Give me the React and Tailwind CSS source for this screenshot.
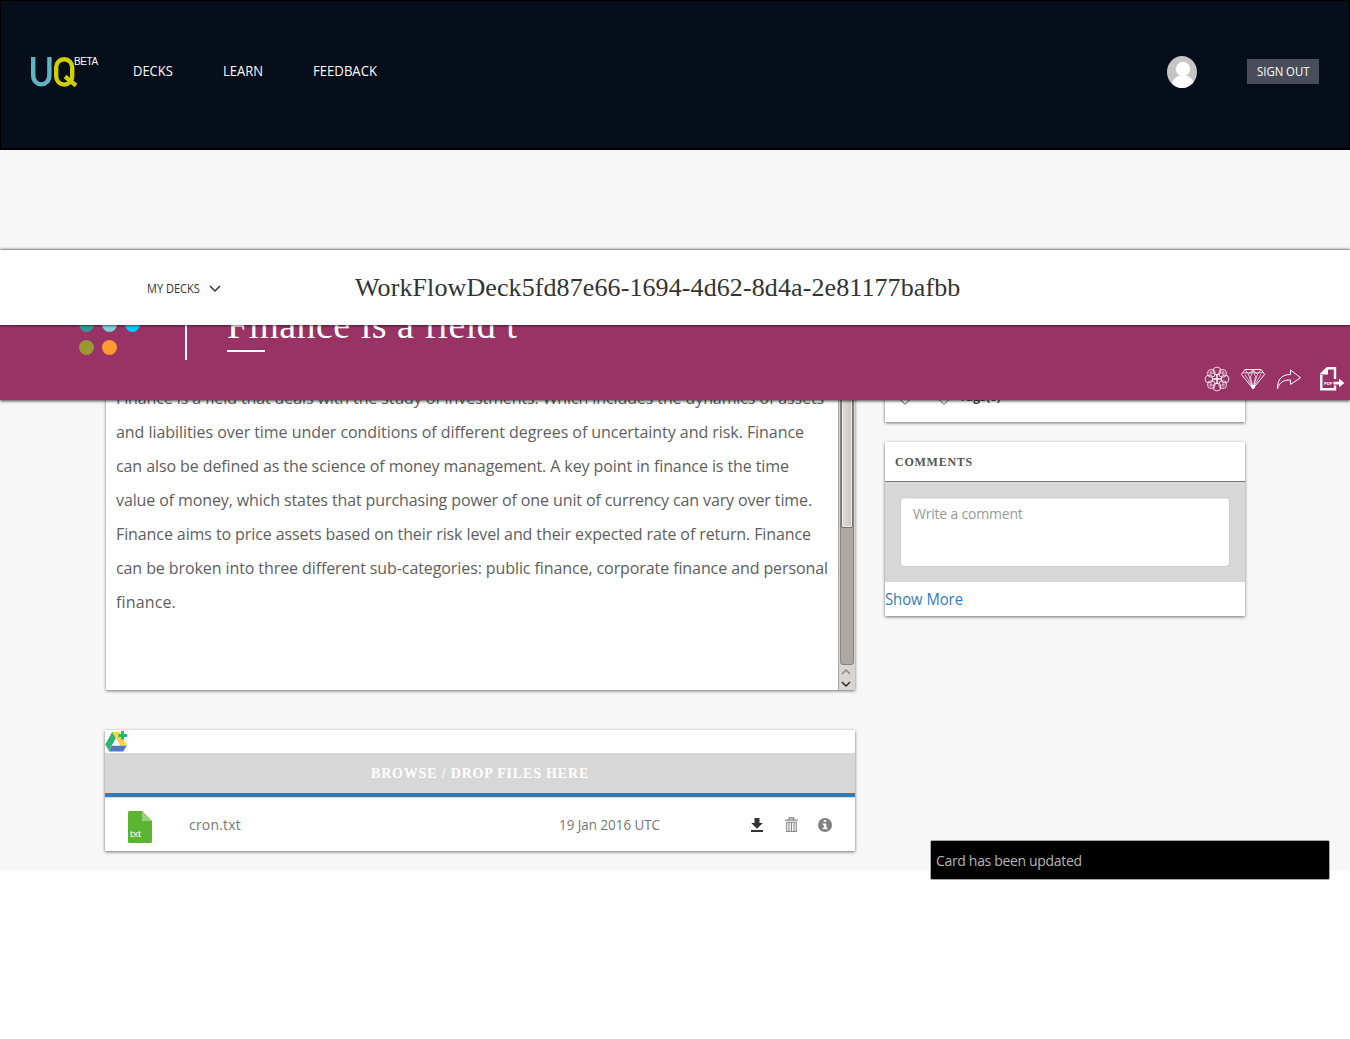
import React from "react";

const sans = "font-['Open_Sans',sans-serif]";
const serif = "font-['Liberation_Serif',serif]";

const lines = [
  ["Finance is a field that deals with the study of investments. Which includes the dynamics of assets", "tracking-[-0.105px]"],
  ["and liabilities over time under conditions of different degrees of uncertainty and risk. Finance", "tracking-[-0.053px]"],
  ["can also be defined as the science of money management. A key point in finance is the time", "tracking-[-0.09px]"],
  ["value of money, which states that purchasing power of one unit of currency can vary over time.", "tracking-[-0.112px]"],
  ["Finance aims to price assets based on their risk level and their expected rate of return. Finance", "tracking-[-0.097px]"],
  ["can be broken into three different sub-categories: public finance, corporate finance and personal", "tracking-[-0.092px]"],
  ["finance.", "tracking-[0.14px]"],
];

function Caps({ children, className = "" }) {
  return <span className={"inline-block origin-left whitespace-nowrap " + className}>{children}</span>;
}

function Logo() {
  return (
    <svg width="47" height="32" viewBox="0 0 47 32" fill="none">
      <path d="M2.2 1V19C2.2 31.5 18.4 31.5 18.4 19V1" stroke="#5fb4c4" strokeWidth="4.4" />
      <rect x="25.2" y="3.2" width="16" height="25.4" rx="8" stroke="#cfd000" strokeWidth="4.4" />
      <path d="M34 20.5L45 29.5" stroke="#cfd000" strokeWidth="4.2" />
    </svg>
  );
}

function Avatar() {
  return (
    <svg width="30" height="32" viewBox="0 0 30 32">
      <defs><clipPath id="oval"><ellipse cx="15" cy="16" rx="15" ry="16" /></clipPath></defs>
      <g clipPath="url(#oval)">
        <rect width="30" height="32" fill="#c5c5c5" />
        <circle cx="16" cy="13" r="7.2" fill="#fff" />
        <path d="M4 32C5 24 9 19 16 19C23 19 27 24 28 32Z" fill="#fff" />
      </g>
    </svg>
  );
}

function Rosette() {
  const a = [0, 45, 90, 135, 180, 225, 270, 315];
  return (
    <svg width="26" height="26" viewBox="-13 -13 26 26" fill="none" stroke="#fff" strokeWidth="0.8">
      {a.map((d) => (
        <circle key={d} cx={8 * Math.cos((d * Math.PI) / 180)} cy={8 * Math.sin((d * Math.PI) / 180)} r="3.9" />
      ))}
      <path d="M-5 0H5M0 -5V5" strokeWidth="1.4" />
      <path d="M-8.5 -6H-3.5M-6 -8.5V-3.5M3.5 -6H8.5M6 -8.5V-3.5M-8.5 6H-3.5M-6 3.5V8.5M3.5 6H8.5M6 3.5V8.5" strokeWidth="0.6" />
    </svg>
  );
}

function Diamond() {
  return (
    <svg width="26" height="22" viewBox="0 0 26 22" fill="none" stroke="#fff" strokeWidth="1">
      <path d="M5 1.5H21L24.6 6.5L13 20.5L1.4 6.5Z" strokeWidth="1" />
      <path d="M3 4.8H23M5 1.5L8.5 6.5L13 1.5L17.5 6.5L21 1.5M8.5 6.5L13 20M17.5 6.5L13 20M5 6.5L12.5 19M21 6.5L13.5 19M13 1.5L10.5 9L13 20L15.5 9Z" strokeWidth="0.7" />
      <path d="M11.2 17H14.8V19.5L13 21.5L11.2 19.5Z" fill="#fff" stroke="none" />
    </svg>
  );
}

function Share() {
  return (
    <svg width="26" height="22" viewBox="0 0 26 22" fill="none" stroke="#fff" strokeWidth="1" strokeLinejoin="round">
      <path d="M1.4 21C1.4 11 6 6.6 14.5 6.4V2.1L24.6 9.7L14.5 16.4V12C7.5 11.7 3.2 14.5 1.4 21Z" />
    </svg>
  );
}

function Pdf() {
  return (
    <svg width="26" height="26" viewBox="0 0 26 26">
      <path d="M2.3 9V23.3H16V19.5M9 2.2H16V13" fill="none" stroke="#fff" strokeWidth="2.4" />
      <path d="M1.1 7.5L7.8 1H9V8.5H1.1Z" fill="#fff" />
      <path d="M14.5 15.7H20V12.6L25.3 17L20 21.5V18.6H14.5Z" fill="#fff" />
      <text x="5" y="18.7" fontSize="4.4" fontWeight="700" fill="#fff" textLength="8.4" lengthAdjust="spacingAndGlyphs" fontFamily="Liberation Sans">PDF</text>
    </svg>
  );
}

function Drive() {
  return (
    <svg width="23" height="22" viewBox="0 0 23 22">
      <path d="M7.2 2H14.5L21.8 15H14.8Z" fill="#ffd04b" />
      <path d="M7.2 2L11 8.5L4 20.8L0.2 14.5Z" fill="#2db670" />
      <path d="M7 15.5H21.8L18.3 21.5H3.7Z" fill="#527abf" />
      <path d="M11 8L15 15.5H7Z" fill="#fff" />
      <path d="M16 1H19V4H22V7H19V9.5H16V7H13.3V4H16Z" fill="#2db670" />
    </svg>
  );
}

function TxtFile() {
  return (
    <svg width="24" height="32" viewBox="0 0 24 32">
      <path d="M1.5 0H14L24 10V30.5Q24 32 22.5 32H1.5Q0 32 0 30.5V1.5Q0 0 1.5 0Z" fill="#5bb432" />
      <path d="M14 0L24 10H14Z" fill="#98d07c" />
      <text x="2" y="26" fontSize="9.5" fill="#fff" textLength="11" lengthAdjust="spacingAndGlyphs" fontFamily="Liberation Sans">txt</text>
    </svg>
  );
}

function Download() {
  return (
    <svg width="12" height="15" viewBox="0 0 12 15" fill="#333">
      <path d="M3.5 1H8.5V6H11.8L6 11.8L0.2 6H3.5Z" />
      <path d="M0 13H12V15H0Z" />
    </svg>
  );
}

function Trash() {
  return (
    <svg width="13" height="16" viewBox="0 0 13 16" fill="none" stroke="#888">
      <path d="M0 3.2H13M4.3 3V1H8.7V3" strokeWidth="1.3" />
      <path d="M1.7 5V14.5H11.3V5M1.2 5.2H11.8M4 5V14M6.5 5V14M9 5V14" strokeWidth="1.1" />
    </svg>
  );
}

function Info() {
  return (
    <svg width="14" height="14" viewBox="0 0 14 14">
      <circle cx="7" cy="7" r="7" fill="#808080" />
      <path d="M5.8 2H8.3V4.1H5.8ZM4.7 5.4H8.4V9.8H9.5V11.3H4.7V9.8H5.8V6.9H4.7Z" fill="#fff" />
    </svg>
  );
}

function TagOutline() {
  return (
    <svg width="14" height="14" viewBox="0 0 14 14" fill="none" stroke="#555">
      <path d="M1.5 1.5V8L7 13.3L12.5 8V1.5Z" />
    </svg>
  );
}

function Arrow({ up, color }) {
  return (
    <svg width="10" height="6" viewBox="0 0 10 6" fill="none" stroke={color} strokeWidth="1.4">
      <path d={up ? "M1 5L5 1L9 5" : "M1 1L5 5L9 1"} />
    </svg>
  );
}

function Header() {
  return (
    <header className="flex h-[150px] items-start border border-b-2 border-black bg-[#060d1b] px-[30px] pt-[55px] text-white">
      <div className="flex w-[102px]">
        <Logo />
        <span className="-ml-[4px] text-[10px] leading-[12px] font-['Liberation_Sans',sans-serif] tracking-[-0.4px]">BETA</span>
      </div>
      <nav className="-mt-[1px] flex text-[15px] leading-[30px]">
        <Caps className="w-[90px] scale-x-[0.865]">DECKS</Caps>
        <Caps className="w-[90px] scale-x-[0.865]">LEARN</Caps>
        <Caps className="w-[90px] scale-x-[0.875]">FEEDBACK</Caps>
      </nav>
      <div className="ml-auto flex">
        <Avatar />
        <button className="mt-[3px] ml-[50px] h-[25px] w-[72px] bg-[#494d59] pl-[10px] text-left text-[12px] leading-[25px]">
          <Caps className="scale-x-[0.945]">SIGN OUT</Caps>
        </button>
      </div>
    </header>
  );
}

function DeckBar() {
  return (
    <div className="relative z-20 mt-[100px] flex h-[75px] items-center bg-white text-[#333] shadow-[0_0_3px_#000]">
      <div className="flex w-[355px] items-center pt-[3px] pl-[147px]">
        <Caps className="w-[62px] scale-x-[0.92] text-[12px]">MY DECKS</Caps>
        <svg width="12" height="8" viewBox="0 0 12 8" fill="none" stroke="#333" strokeWidth="1.5"><path d="M1 1L6 6L11 1" /></svg>
      </div>
      <h1 className={serif + " text-[26px] leading-[30px] tracking-[0.1px] whitespace-nowrap"}>WorkFlowDeck5fd87e66-1694-4d62-8d4a-2e81177bafbb</h1>
    </div>
  );
}

function CardBar() {
  return (
    <div className="relative z-10 flex h-[75px] items-start bg-[#993366] shadow-[0_1px_3px_rgba(0,0,0,0.75)]">
      <div className="-mt-[8px] ml-[79px] grid w-[106px] grid-cols-[15px_15px_15px] gap-2">
        <i className="size-[15px] rounded-full bg-[#339999]" />
        <i className="size-[15px] rounded-full bg-[#7fd0dc]" />
        <i className="size-[15px] rounded-full bg-[#00ccff]" />
        <i className="size-[15px] rounded-full bg-[#999933]" />
        <i className="size-[15px] rounded-full bg-[#ff9933]" />
      </div>
      <div className="h-[35px] w-[2px] bg-white" />
      <div className="-mt-[23px] ml-[40px]">
        <h2 className={serif + " h-[48px] text-[38px] leading-[46px] tracking-[0.48px] whitespace-nowrap text-white"}>Finance is a field t</h2>
        <div className="h-[2px] w-[38px] bg-white" />
      </div>
      <div className="mt-[41px] mr-[5px] ml-auto flex items-center">
        <Rosette />
        <span className="ml-[10px]"><Diamond /></span>
        <span className="ml-[10px]"><Share /></span>
        <span className="ml-[17px]"><Pdf /></span>
      </div>
    </div>
  );
}

function Scrollbar() {
  return (
    <div className="flex w-[17px] flex-col items-start border-l border-[#a8a8a8] bg-[#d8d5d2] pl-[1px]">
      <div className="h-[284px] w-[14px] rounded-b-[3px] border border-[#8a8481] bg-[#afa7a4]">
        <div className="h-[146px] rounded-b-[2px] border border-[#77726f] bg-gradient-to-r from-[#dfdcd9] to-[#cac6c2] shadow-[inset_0_0_0_1px_#efedeb]" />
      </div>
      <div className="mt-[4px] ml-[1px] flex flex-col gap-[6px]">
        <Arrow up color="#888" />
        <Arrow color="#222" />
      </div>
    </div>
  );
}

const card = "bg-white shadow-[0_1px_3px_rgba(0,0,0,0.55)]";

export default function App() {
  return (
    <div className={sans + " relative h-[1039px] w-[1350px] overflow-hidden bg-white"}>
      <div className="h-[871px] bg-[#f7f7f7]">
        <Header />
        <DeckBar />
        <CardBar />
        <main className="-mt-[19px] flex gap-[30px] pl-[105px]">
          <div className="w-[750px]">
            <section className={card + " ml-px flex h-[309px]"}>
              <div className="w-[732px] pl-[10px] text-[16px] leading-[34px] text-[#5e5e5e]">
                {lines.map(([t, ls]) => <p key={t} className={"whitespace-nowrap " + ls}>{t}</p>)}
              </div>
              <Scrollbar />
            </section>
            <section className={card + " mt-[40px] h-[121px]"}>
              <div className="h-[23px]"><Drive /></div>
              <div className={serif + " h-[44px] border-b-4 border-[#337ab7] bg-[#d7d7d7] pl-[266px] text-[14px] leading-[41px] font-bold tracking-[0.82px] text-white"}>BROWSE / DROP FILES HERE</div>
              <div className="flex h-[54px] items-center border-t border-[#ddd] pl-[23px] text-[14px] text-[#777]">
                <span className="mt-[5px] w-[61px]"><TxtFile /></span>
                <span className="w-[370px] tracking-[0.2px]">cron.txt</span>
                <Caps className="w-[192px] scale-x-[0.955]">19 Jan 2016 UTC</Caps>
                <Download />
                <span className="ml-[22px]"><Trash /></span>
                <span className="ml-[20px]"><Info /></span>
              </div>
            </section>
          </div>
          <aside className="w-[360px]">
            <section className={card + " flex h-[41px] items-start pt-[10px] pl-[13px] text-[#444]"}>
              <TagOutline />
              <span className="ml-[25px]"><TagOutline /></span>
              <span className="-mt-[2px] ml-[8px] text-[12px] leading-[16px] font-bold">Tags(0)</span>
            </section>
            <section className={card + " mt-[20px] h-[174px]"}>
              <h3 className={serif + " h-[40px] border-b border-[#777] pl-[10px] text-[12px] leading-[40px] font-bold tracking-[0.75px] text-[#555]"}>COMMENTS</h3>
              <div className="h-[100px] bg-[#d7d7d7] p-[15px]">
                <div className="h-[70px] rounded-[4px] border border-[#ccc] bg-white px-[12px] pt-[6px] text-[14px] leading-[20px] tracking-[-0.2px] text-[#999] shadow-[inset_0_1px_1px_rgba(0,0,0,0.075)]">Write a comment</div>
              </div>
              <a className="block h-[34px] text-[16px] leading-[34px] text-[#337ab7]"><Caps className="scale-x-[0.925]">Show More</Caps></a>
            </section>
          </aside>
        </main>
      </div>
      <div className="absolute top-[840px] left-[930px] h-[40px] w-[400px] rounded-[2px] border border-[#aaa] bg-black pl-[5px] text-[14px] leading-[40px] tracking-[-0.33px] text-[#b5b5b5]">Card has been updated</div>
    </div>
  );
}
